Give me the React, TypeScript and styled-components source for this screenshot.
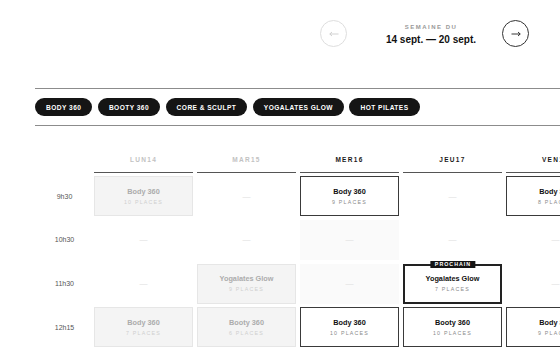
import React from "react";
import styled, { createGlobalStyle, css } from "styled-components";

const Global = createGlobalStyle`
  html, body { margin: 0; padding: 0; background: #fff; }
  body { font-family: "Liberation Sans", Arial, sans-serif; overflow: hidden; width: 560px; height: 350px; }
`;

const Page = styled.div`
  padding-left: 35px;
  width: 525px;
  overflow: hidden;
`;

const Nav = styled.div`
  display: flex;
  justify-content: flex-end;
  align-items: flex-start;
  padding: 20px 31px 0 0;
  height: 27px;
  margin-bottom: 41px;
`;

const Circle = styled.button<{ $active?: boolean }>`
  width: 27px;
  height: 27px;
  border-radius: 50%;
  padding: 0;
  background: #fff;
  display: flex;
  align-items: center;
  justify-content: center;
  border: 1px solid ${(p) => (p.$active ? "#333" : "#dedede")};
  color: ${(p) => (p.$active ? "#222" : "#ccc")};
  box-sizing: border-box;
`;

const Week = styled.div`
  width: 102px;
  margin: 3px 20px 0 33px;
  text-align: center;
  display: flex;
  flex-direction: column;
  gap: 3px;
`;

const WeekLabel = styled.div`
  font-size: 6px;
  line-height: 8px;
  font-weight: 700;
  letter-spacing: 1.5px;
  color: #999;
`;

const WeekRange = styled.div`
  font-size: 10px;
  line-height: 12px;
  font-weight: 700;
  color: #111;
  white-space: nowrap;
`;

const Filters = styled.div`
  border-top: 1px solid #8c8c8c;
  border-bottom: 1px solid #8c8c8c;
  padding: 9px 0 9px;
  display: flex;
  gap: 5.5px;
  margin-right: -40px;
`;

const Chip = styled.div`
  height: 18px;
  border-radius: 9px;
  background: #151515;
  color: #fff;
  font-size: 6.6px;
  font-weight: 700;
  letter-spacing: 0.45px;
  padding: 0 11px;
  display: flex;
  align-items: center;
  white-space: nowrap;
`;

const Grid = styled.div`
  margin-top: 30px;
  display: grid;
  grid-template-columns: 55px repeat(5, 99px);
  grid-auto-rows: 40px;
  grid-template-rows: 16.5px;
  column-gap: 4px;
  row-gap: 3.7px;
  width: max-content;
`;

const DayHead = styled.div<{ $past?: boolean }>`
  font-size: 6.5px;
  line-height: 8px;
  font-weight: 700;
  letter-spacing: 1.3px;
  text-align: center;
  padding-bottom: 7px;
  border-bottom: 1.5px solid #555;
  color: ${(p) => (p.$past ? "#c2c2c2" : "#1a1a1a")};
`;

const Corner = styled.div``;

const Time = styled.div`
  display: flex;
  align-items: center;
  justify-content: center;
  padding-left: 4px;
  font-size: 7px;
  color: #555;
`;

type Kind = "past" | "future" | "next";

const Card = styled.div<{ $kind: Kind }>`
  position: relative;
  box-sizing: border-box;
  display: flex;
  flex-direction: column;
  align-items: center;
  justify-content: center;
  gap: 3px;
  ${(p) =>
    p.$kind === "past"
      ? css`
          background: #f4f4f4;
          border: 1px solid #e6e6e6;
          color: #acacac;
        `
      : p.$kind === "next"
      ? css`
          background: #fff;
          border: 2px solid #222;
          color: #111;
        `
      : css`
          background: #fff;
          border: 1px solid #3a3a3a;
          color: #111;
        `}
`;

const Title = styled.div`
  font-size: 7.3px;
  line-height: 9px;
  font-weight: 700;
  margin-top: -1px;
`;

const Places = styled.div<{ $past?: boolean }>`
  font-size: 5.3px;
  line-height: 6px;
  letter-spacing: 1.2px;
  color: ${(p) => (p.$past ? "#cfcfcf" : "#8a8a8a")};
`;

const Badge = styled.div`
  position: absolute;
  top: -5px;
  left: 50%;
  transform: translateX(-50%);
  background: #151515;
  color: #fff;
  font-size: 5.3px;
  line-height: 7px;
  font-weight: 700;
  letter-spacing: 1px;
  padding: 0 4px 0 5px;
`;

const Empty = styled.div<{ $today?: boolean }>`
  display: flex;
  align-items: center;
  justify-content: center;
  background: ${(p) => (p.$today ? "#fafafa" : "transparent")};
  color: #dcdcdc;
  font-size: 8px;
`;

const Arrow = ({ dir }: { dir: "left" | "right" }) => (
  <svg width="10" height="6" viewBox="0 0 10 6" fill="none" stroke="currentColor" strokeWidth="0.9">
    {dir === "right" ? (
      <>
        <path d="M0.5 3H9.2" />
        <path d="M7 1L9.2 3L7 5" />
      </>
    ) : (
      <>
        <path d="M0.8 3H9.5" />
        <path d="M3 1L0.8 3L3 5" />
      </>
    )}
  </svg>
);

const days = [
  { label: "LUN14", past: true },
  { label: "MAR15", past: true },
  { label: "MER16", past: false, today: true },
  { label: "JEU17", past: false },
  { label: "VEN18", past: false },
];

type Slot = null | { title: string; places: string; next?: boolean };

const rows: { time: string; slots: Slot[] }[] = [
  {
    time: "9h30",
    slots: [
      { title: "Body 360", places: "10 PLACES" },
      null,
      { title: "Body 360", places: "9 PLACES" },
      null,
      { title: "Body 360", places: "8 PLACES" },
    ],
  },
  { time: "10h30", slots: [null, null, null, null, null] },
  {
    time: "11h30",
    slots: [
      null,
      { title: "Yogalates Glow", places: "9 PLACES" },
      null,
      { title: "Yogalates Glow", places: "7 PLACES", next: true },
      null,
    ],
  },
  {
    time: "12h15",
    slots: [
      { title: "Body 360", places: "7 PLACES" },
      { title: "Booty 360", places: "6 PLACES" },
      { title: "Body 360", places: "10 PLACES" },
      { title: "Booty 360", places: "10 PLACES" },
      { title: "Body 360", places: "9 PLACES" },
    ],
  },
];

const chips = ["BODY 360", "BOOTY 360", "CORE & SCULPT", "YOGALATES GLOW", "HOT PILATES"];

export default function App() {
  return (
    <>
      <Global />
      <Page>
        <Nav>
          <Circle aria-label="Semaine précédente">
            <Arrow dir="left" />
          </Circle>
          <Week>
            <WeekLabel>SEMAINE DU</WeekLabel>
            <WeekRange>14 sept. — 20 sept.</WeekRange>
          </Week>
          <Circle $active aria-label="Semaine suivante">
            <Arrow dir="right" />
          </Circle>
        </Nav>
        <Filters>
          {chips.map((c) => (
            <Chip key={c}>{c}</Chip>
          ))}
        </Filters>
        <Grid>
          <Corner />
          {days.map((d) => (
            <DayHead key={d.label} $past={d.past}>
              {d.label}
            </DayHead>
          ))}
          {rows.map((r) => (
            <React.Fragment key={r.time}>
              <Time>{r.time}</Time>
              {r.slots.map((s, i) => {
                const day = days[i];
                if (!s)
                  return (
                    <Empty key={i} $today={day.today}>
                      —
                    </Empty>
                  );
                const kind: Kind = day.past ? "past" : s.next ? "next" : "future";
                return (
                  <Card key={i} $kind={kind}>
                    {s.next && <Badge>PROCHAIN</Badge>}
                    <Title>{s.title}</Title>
                    <Places $past={day.past}>{s.places}</Places>
                  </Card>
                );
              })}
            </React.Fragment>
          ))}
        </Grid>
      </Page>
    </>
  );
}
